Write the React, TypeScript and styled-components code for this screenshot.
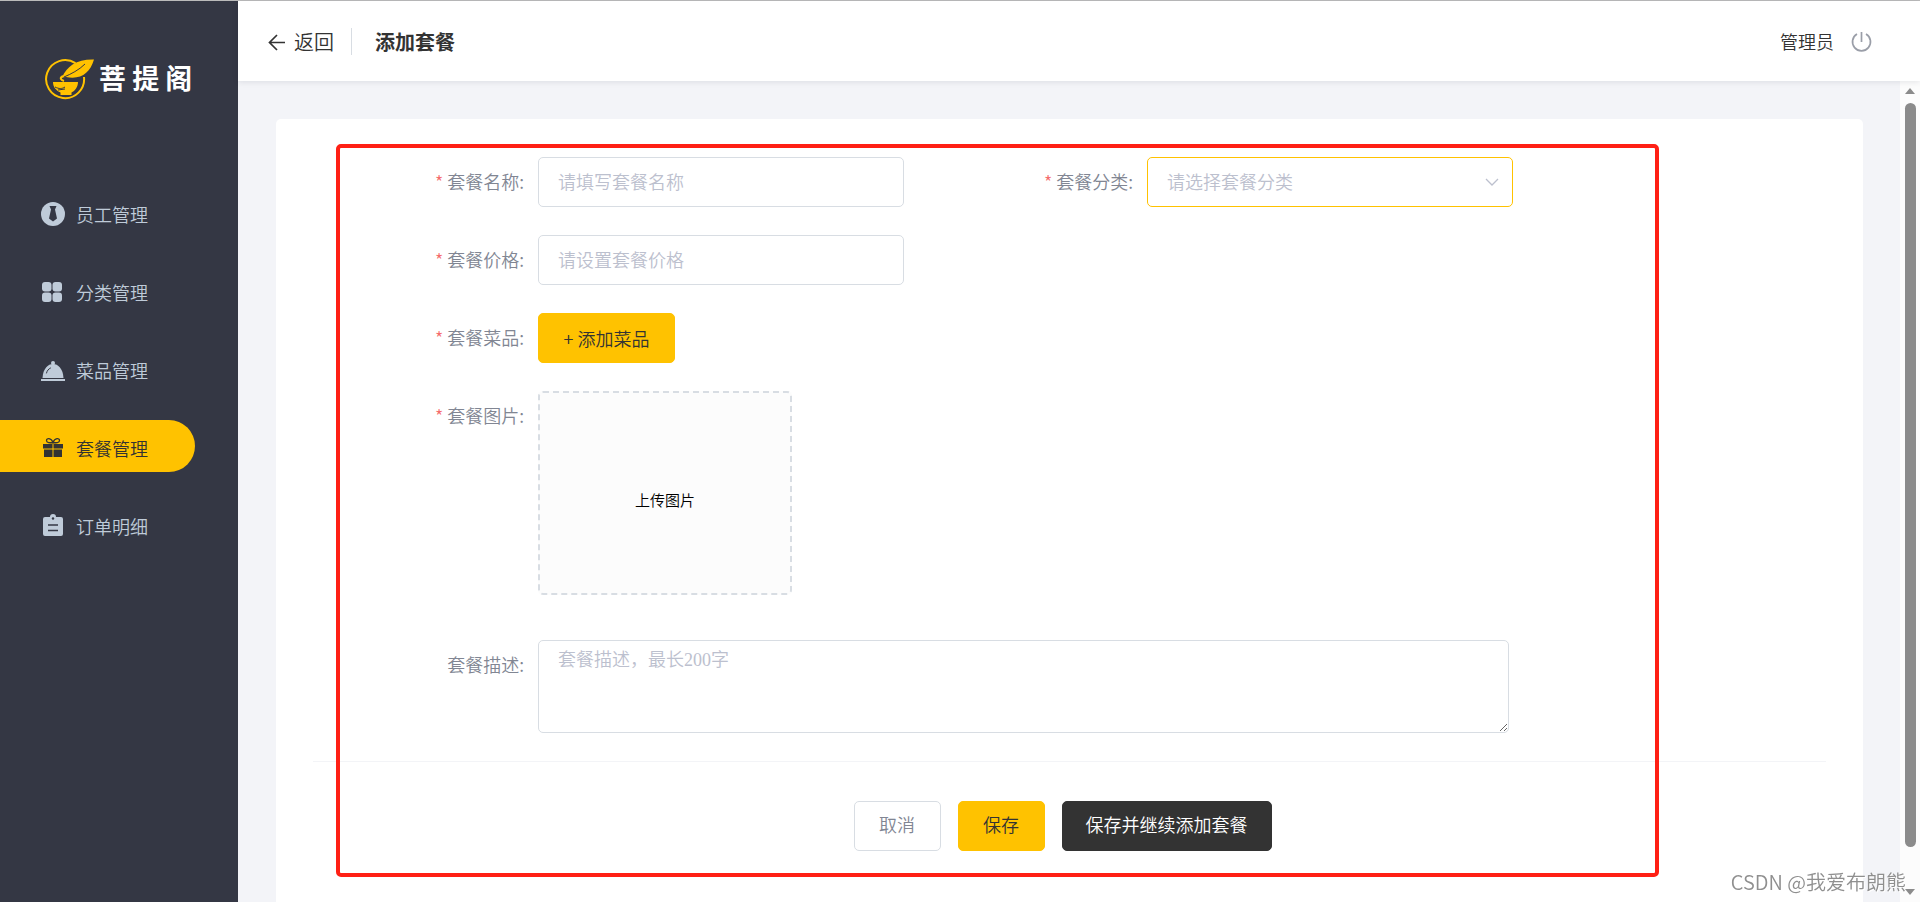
import React from "react";
import styled, { createGlobalStyle, css } from "styled-components";

const sans = `"Noto Sans CJK SC", sans-serif`;

const GlobalStyle = createGlobalStyle`
  *, *::before, *::after { box-sizing: border-box; }
  body { margin: 0; font-family: ${sans}; font-size: 18px; font-weight: 350; color: #333; background: #f3f4f8; }
  button, input, select { font: inherit; }
`;

const Shell = styled.div`
  display: flex;
  height: 100vh;
  min-height: 600px;
  border-top: 1px solid #bbb;
`;

const Sidebar = styled.aside`
  flex: none;
  width: 238px;
  background: #343744;
`;

const Brand = styled.div`
  display: flex;
  align-items: center;
  gap: 3px;
  padding: 57px 0 0 44px;
  height: 99px;
`;

const BrandName = styled.span`
  color: #fff;
  font-size: 27px;
  font-weight: 700;
  line-height: 38px;
  padding-bottom: 2px;
  white-space: nowrap;
`;

const Menu = styled.nav`
  display: flex;
  flex-direction: column;
  gap: 26px;
  margin-top: 86px;
`;

const MenuLink = styled.a<{ $active?: boolean }>`
  display: flex;
  align-items: center;
  gap: 10px;
  width: 195px;
  height: 52px;
  padding: 3px 0 0 41px;
  border-radius: 0 26px 26px 0;
  text-decoration: none;
  white-space: nowrap;
  color: ${(p) => (p.$active ? "#333" : "#bfcbd9")};
  background: ${(p) => (p.$active ? "#ffc200" : "transparent")};
`;

const Main = styled.div`
  flex: 1;
  min-width: 0;
  display: flex;
  flex-direction: column;
`;

const Header = styled.header`
  position: relative;
  flex: none;
  display: flex;
  align-items: center;
  height: 80px;
  padding: 0 48px 0 30px;
  background: #fff;
  box-shadow: 0 1px 6px rgba(0, 21, 41, 0.1);
`;

const BackButton = styled.button`
  display: flex;
  align-items: center;
  gap: 8px;
  padding: 1px 17px 0 0;
  border: 0;
  background: none;
  color: #333;
  font-size: 20px;
  line-height: 26px;
`;

const PageTitle = styled.h1`
  flex: 1;
  margin: 0;
  padding: 1px 0 0 23px;
  border-left: 1px solid #d8dde3;
  font-size: 20px;
  font-weight: 700;
  line-height: 26px;
`;

const LogoutButton = styled.button`
  display: flex;
  margin-left: 17px;
  padding: 0;
  border: 0;
  background: none;
`;

const Body = styled.div`
  flex: 1;
  min-height: 0;
  display: flex;
`;

const Content = styled.main`
  flex: 1;
  min-width: 0;
  padding: 38px 37px 38px 38px;
  overflow: auto;
  scrollbar-width: none;
`;

const ScrollTrack = styled.div`
  flex: none;
  display: flex;
  flex-direction: column;
  align-items: center;
  justify-content: space-between;
  width: 20px;
  padding: 7px 0;
  background: #fcfcfc;
`;

const ScrollThumb = styled.div`
  flex: 1;
  width: 11px;
  margin: 9px 0 42px;
  border-radius: 6px;
  background: #8b8b8b;
`;

const Card = styled.form`
  position: relative;
  padding: 38px 37px 60px;
  border-radius: 5px;
  background: #fff;
`;

const Highlight = styled.div`
  position: absolute;
  inset: 25px 204px 34px 60px;
  border: 4px solid #ff2015;
  border-radius: 5px;
  pointer-events: none;
`;

const Rows = styled.div`
  display: flex;
  flex-direction: column;
  gap: 28px;
`;

const Row = styled.div`
  display: flex;
  gap: 18px;
`;

const Item = styled.div`
  display: flex;
  align-items: flex-start;
`;

const Label = styled.label<{ $required?: boolean }>`
  width: 225px;
  padding-right: 14px;
  color: #818693;
  line-height: 48px;
  text-align: right;
  white-space: nowrap;
  ${(p) =>
    p.$required &&
    css`
      &::before {
        content: "*";
        margin-right: 4px;
        color: #f56c6c;
      }
    `}
`;

const control = css`
  border: 1px solid #d8dde3;
  border-radius: 5px;
  outline: 0;
  background: #fff;
  color: #333;
  &::placeholder {
    color: #bcc0ce;
    opacity: 1;
  }
`;

const TextInput = styled.input`
  ${control}
  width: 366px;
  height: 50px;
  padding: 0 19px 2px;
`;

const SelectWrap = styled.div`
  position: relative;
  width: 366px;
`;

const Select = styled.select`
  ${control}
  width: 100%;
  height: 50px;
  padding: 0 19px 2px;
  border-color: #ffc200;
  color: #bcc0ce;
  appearance: none;
`;

const SelectArrow = styled.svg`
  position: absolute;
  top: 20px;
  right: 14px;
  pointer-events: none;
`;

const TextArea = styled.textarea`
  ${control}
  display: block;
  width: 971px;
  height: 93px;
  padding: 6px 19px;
  font: 350 18px/26px "Liberation Serif", "Noto Sans CJK SC", serif;
  resize: vertical;
`;

const UploadItem = styled(Item)`
  margin-bottom: 17px;
`;

const UploadBox = styled.button`
  width: 254px;
  height: 204px;
  padding: 12px 0 0;
  border: 2px dashed #d8dde3;
  border-radius: 5px;
  background: #fcfcfc;
  color: #000;
  font-size: 15px;
`;

type Tone = "plain" | "primary" | "dark";

const tones = {
  plain: css`background: #fff; color: #818693; border-color: #d8dde3;`,
  primary: css`background: #ffc200; color: #333; border-color: #ffc200;`,
  dark: css`background: #333; color: #fff; border-color: #333;`,
};

const Button = styled.button<{ $tone: Tone }>`
  min-width: 87px;
  height: 50px;
  padding: 0 23px;
  border: 1px solid;
  border-radius: 5px;
  white-space: nowrap;
  ${(p) => tones[p.$tone]}
`;

const AddButton = styled(Button)`
  min-width: 137px;
`;

const Actions = styled.div`
  display: flex;
  justify-content: center;
  gap: 17px;
  margin-top: 28px;
  padding: 39px 14px 0 0;
  border-top: 1px solid #f3f4f7;

  ${Button} {
    padding-bottom: 4px;
  }
`;

const Watermark = styled.div`
  position: fixed;
  right: 14px;
  bottom: 6px;
  color: #8f8f8f;
  font-size: 20px;
  line-height: 28px;
  text-shadow: 1px 1px 0 #fff;
  white-space: nowrap;
`;

const Logo = () => (
  <svg width="52" height="42" viewBox="0 0 52 42" aria-hidden="true">
    <path d="M31.5 5.2A19 19 0 1 0 40 19" fill="none" stroke="#ffc200" strokeWidth="2" />
    <path d="M9 24h25c0 5-3 9-6.500 10.500v2.500h-11v-2.500C12 32.500 9 29 9 24z" fill="#ffc200" />
    <path d="M18 19.500C23 8 33 1 50 1.500 46 15 37 22 22 19z" fill="#ffc200" />
    <path d="M20 19C27 16 35 12 41 6M11 29c4 2 7 2 10 0M14 32l7-1" fill="none" stroke="#343744" />
    <path d="M19 18c-4 2-2 4 1 5" fill="none" stroke="#ffc200" strokeWidth="2" />
  </svg>
);

const StaffIcon = () => (
  <svg width="25" height="24" viewBox="0 0 25 24" aria-hidden="true">
    <circle cx="12" cy="12" r="12" fill="currentColor" />
    <path d="M8.500 4h7L14 7.500l2 9L12 19.500l-4-3 2-9z" fill="#343744" />
  </svg>
);

const GridIcon = () => (
  <svg width="25" height="24" viewBox="0 0 25 24" fill="currentColor" aria-hidden="true">
    <rect x="1" y="2" width="9.500" height="9.500" rx="3" />
    <rect x="11.500" y="2" width="9.500" height="9.500" rx="3" />
    <rect x="1" y="12.500" width="9.500" height="9.500" rx="3" />
    <rect x="11.500" y="12.500" width="9.500" height="9.500" rx="3" />
  </svg>
);

const DishIcon = () => (
  <svg width="25" height="24" viewBox="0 0 25 24" fill="currentColor" aria-hidden="true">
    <circle cx="12" cy="5" r="2" />
    <path d="M1.500 20C2 10.500 7 6 12 6S22 10.500 22.500 20z" />
    <path d="M0 21h24V23H0z" />
    <path d="M5.500 15c.6-2.500 2-4 4-5" fill="none" stroke="#343744" strokeLinecap="round" />
  </svg>
);

const GiftIcon = () => (
  <svg width="25" height="24" viewBox="0 0 25 24" fill="currentColor" aria-hidden="true">
    <path d="M2 8h9.500v4.500H2zM12.500 8H22v4.500h-9.500zM3 13.500h8.500V21H3zM12.500 13.500H21V21h-8.500z" />
    <path d="M12 6.500C9 7 5.500 7 5.500 4.500S10 1.500 12 6.500c2-5 6.500-4.500 6.500-2S15 7 12 6.500z" fill="none" stroke="currentColor" strokeWidth="1.300" />
  </svg>
);

const OrderIcon = () => (
  <svg width="25" height="24" viewBox="0 0 25 24" aria-hidden="true">
    <path d="M4 3h5a3 3 0 0 1 6 0h5a2 2 0 0 1 2 2v15a2 2 0 0 1-2 2H4a2 2 0 0 1-2-2V5a2 2 0 0 1 2-2z" fill="currentColor" />
    <circle cx="12" cy="4.500" r="1.200" fill="#343744" />
    <path d="M7 11h10M7 16.500h10" stroke="#343744" strokeWidth="1.500" />
  </svg>
);

const menu = [
  { text: "员工管理", Icon: StaffIcon },
  { text: "分类管理", Icon: GridIcon },
  { text: "菜品管理", Icon: DishIcon },
  { text: "套餐管理", Icon: GiftIcon, active: true },
  { text: "订单明细", Icon: OrderIcon },
];

export default function App() {
  return (
    <>
      <GlobalStyle />
      <Shell>
        <Sidebar>
          <Brand>
            <Logo />
            <BrandName>菩 提 阁</BrandName>
          </Brand>
          <Menu>
            {menu.map(({ text, Icon, active }) => (
              <MenuLink key={text} href="#" $active={active}>
                <Icon />
                {text}
              </MenuLink>
            ))}
          </Menu>
        </Sidebar>
        <Main>
          <Header>
            <BackButton type="button">
              <svg width="18" height="18" viewBox="0 0 18 18" fill="none" stroke="#333" strokeWidth="1.700" aria-hidden="true">
                <path d="M17 9.500H1.500M9 2L1.500 9.500 9 17" />
              </svg>
              返回
            </BackButton>
            <PageTitle>添加套餐</PageTitle>
            <span>管理员</span>
            <LogoutButton type="button" aria-label="退出">
              <svg width="21" height="21" viewBox="0 0 21 21" fill="none" stroke="#9a9ea8" strokeWidth="1.700" aria-hidden="true">
                <path d="M6 3a9 9 0 1 0 9 0M10.500 1v10" />
              </svg>
            </LogoutButton>
          </Header>
          <Body>
            <Content>
              <Card onSubmit={(e) => e.preventDefault()}>
                <Rows>
                  <Row>
                    <Item>
                      <Label htmlFor="name" $required>套餐名称:</Label>
                      <TextInput id="name" placeholder="请填写套餐名称" />
                    </Item>
                    <Item>
                      <Label htmlFor="category" $required>套餐分类:</Label>
                      <SelectWrap>
                        <Select id="category" defaultValue="">
                          <option value="">请选择套餐分类</option>
                        </Select>
                        <SelectArrow width="14" height="10" viewBox="0 0 14 10" fill="none" stroke="#bcc0ce" strokeWidth="1.300" aria-hidden="true">
                          <path d="M1 2l6 6 6-6" />
                        </SelectArrow>
                      </SelectWrap>
                    </Item>
                  </Row>
                  <Item>
                    <Label htmlFor="price" $required>套餐价格:</Label>
                    <TextInput id="price" placeholder="请设置套餐价格" />
                  </Item>
                  <Item>
                    <Label htmlFor="dishes" $required>套餐菜品:</Label>
                    <AddButton id="dishes" type="button" $tone="primary">+ 添加菜品</AddButton>
                  </Item>
                  <UploadItem>
                    <Label htmlFor="picture" $required>套餐图片:</Label>
                    <UploadBox id="picture" type="button">上传图片</UploadBox>
                  </UploadItem>
                  <Item>
                    <Label htmlFor="description">套餐描述:</Label>
                    <TextArea id="description" placeholder="套餐描述，最长200字" />
                  </Item>
                </Rows>
                <Actions>
                  <Button type="button" $tone="plain">取消</Button>
                  <Button type="submit" $tone="primary">保存</Button>
                  <Button type="button" $tone="dark">保存并继续添加套餐</Button>
                </Actions>
                <Highlight />
              </Card>
            </Content>
            <ScrollTrack aria-hidden="true">
              <svg width="10" height="6" viewBox="0 0 10 6"><path d="M5 0l5 6H0z" fill="#8b8b8b" /></svg>
              <ScrollThumb />
              <svg width="10" height="6" viewBox="0 0 10 6"><path d="M5 6L0 0h10z" fill="#8b8b8b" /></svg>
            </ScrollTrack>
          </Body>
        </Main>
      </Shell>
      <Watermark>CSDN @我爱布朗熊</Watermark>
    </>
  );
}
